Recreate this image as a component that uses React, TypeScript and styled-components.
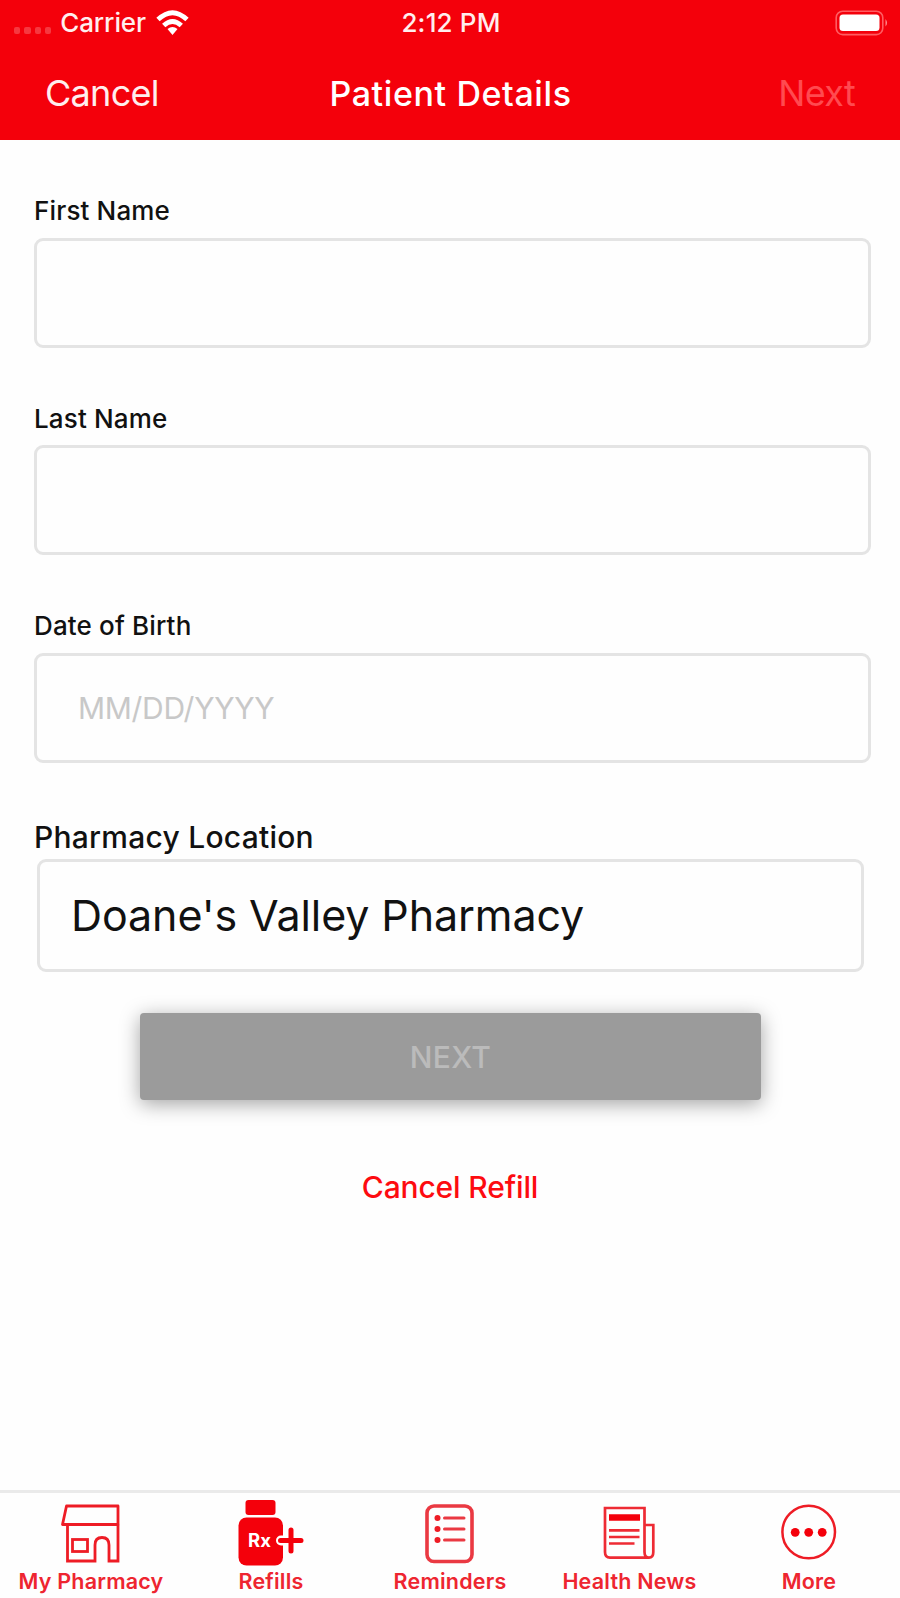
import React from "react";
import styled, { createGlobalStyle } from "styled-components";

const RED = "#f4000b";

const GlobalStyle = createGlobalStyle`
  *, *::before, *::after { box-sizing: border-box; }
  body { margin: 0; background: #fefefe; font-family: Inter, "Liberation Sans", sans-serif; color: #111; }
  button, input { font-family: inherit; }
`;

const Screen = styled.div`
  width: 900px;
  height: 1598px;
  display: flex;
  flex-direction: column;
  overflow: hidden;
  background: #fefefe;
`;

const Header = styled.header`
  height: 140px;
  flex: none;
  background: ${RED};
  color: #ffeeee;
`;

const StatusBar = styled.div`
  height: 46px;
  display: grid;
  grid-template-columns: 1fr auto 1fr;
  align-items: center;
  padding: 0 11px 0 14px;
  font-size: 26px;
  font-weight: 500;
  line-height: 46px;
`;

const StatusGroup = styled.div<{ $end?: boolean }>`
  display: flex;
  align-items: center;
  justify-content: ${(p) => (p.$end ? "flex-end" : "flex-start")};
`;

const Signal = styled.div`
  display: flex;
  gap: 4px;
  margin: 15px 9px 0 0;
`;

const SignalDot = styled.i`
  width: 6.3px;
  height: 6.5px;
  border-radius: 2px;
  background: rgba(255, 255, 255, 0.22);
`;

const Carrier = styled.span`
  letter-spacing: -0.1px;
  margin-right: 10px;
`;

const Clock = styled.span`
  letter-spacing: 0.15px;
  margin-right: 1px;
`;

const NavBar = styled.nav`
  height: 94px;
  display: grid;
  grid-template-columns: 1fr auto 1fr;
  align-items: center;
  padding: 0 45px;
`;

const NavButton = styled.button<{ $end?: boolean }>`
  border: 0;
  padding: 0;
  background: none;
  color: inherit;
  font-size: 36px;
  line-height: 44px;
  letter-spacing: -0.7px;
  text-align: ${(p) => (p.$end ? "right" : "left")};
  &:disabled { color: #ff4a50; }
`;

const Title = styled.h1`
  margin: 0;
  padding: 2px 0 0 1px;
  color: #fff;
  font-size: 34px;
  line-height: 44px;
  font-weight: 500;
  letter-spacing: 0.6px;
`;

const Form = styled.main`
  flex: 1;
  display: flex;
  flex-direction: column;
  padding: 55px 29px 0 34px;
`;

const Field = styled.label`
  display: flex;
  flex-direction: column;
  height: 207.5px;
`;

const FieldLabel = styled.span`
  height: 42.5px;
  line-height: 32px;
  font-size: 26px;
  font-weight: 500;
  letter-spacing: 0.15px;
`;

const Input = styled.input`
  height: 110px;
  width: 100%;
  border: 3px solid #e4e4e4;
  border-radius: 9px;
  background: transparent;
  padding: 0 41px;
  font-size: 30px;
  letter-spacing: -0.3px;
  outline: none;
  &::placeholder { color: #c8c8c8; opacity: 1; }
`;

const LocationLabel = styled.div`
  height: 41px;
  line-height: 38px;
  font-size: 30px;
  font-weight: 500;
  letter-spacing: 0.25px;
`;

const LocationBox = styled.div`
  margin: 0 7px 0 3px;
  height: 113px;
  flex: none;
  border: 3px solid #e4e4e4;
  border-radius: 9px;
  padding: 0 31px;
  font-size: 43px;
  line-height: 107px;
  letter-spacing: -0.1px;
  white-space: nowrap;
`;

const NextButton = styled.button`
  width: 621px;
  height: 87px;
  flex: none;
  margin: 41px 0 0 106px;
  padding-top: 3px;
  border: 0;
  border-radius: 4px;
  background: #9b9b9b;
  color: #bbb;
  font-size: 30px;
  font-weight: 500;
  letter-spacing: 0.3px;
  box-shadow: 0 4px 20px rgba(0, 0, 0, 0.36);
`;

const CancelRefill = styled.button`
  margin: 68px 0 0 0;
  padding: 0 5px 0 0;
  border: 0;
  background: none;
  color: #fd0b10;
  font-size: 30px;
  line-height: 38px;
  font-weight: 500;
  letter-spacing: -0.15px;
`;

const TabBar = styled.nav`
  height: 108px;
  flex: none;
  border-top: 3px solid #eaeaea;
  display: grid;
  grid-template-columns: repeat(5, 1fr);
`;

const Tab = styled.a`
  display: flex;
  flex-direction: column;
  align-items: center;
  color: #ee2530;
  font-size: 21.5px;
  line-height: 27px;
  font-weight: 600;
  letter-spacing: 0.2px;
  white-space: nowrap;
  svg { display: block; width: 90px; height: 75px; }
`;

const TabName = styled.span<{ $shift: number }>`
  margin-left: ${(p) => p.$shift}px;
`;

const WifiIcon = () => (
  <svg width="33" height="26" viewBox="0 0 33 26" fill="none" stroke="#fff" strokeWidth="4.8">
    <path d="M2 9.600Q16.500 -4.200 31 9.600" />
    <path d="M7.700 15.500Q16.500 7.400 25.300 15.500" />
    <path d="M11.500 19Q16.500 15 21.500 19L16.500 25Z" fill="#fff" stroke="none" />
  </svg>
);

const BatteryIcon = () => (
  <svg width="54" height="26" viewBox="0 0 54 26">
    <rect x="1.200" y="1.200" width="46.600" height="23.400" rx="6.500" fill="none" stroke="#ff5c62" strokeWidth="1.600" />
    <rect x="4.500" y="4.500" width="40" height="16.500" rx="3.500" fill="#fff" />
    <path d="M50.500 9Q53.600 12.800 50.500 16.500Z" fill="#ff8a8e" />
  </svg>
);

const StoreIcon = () => (
  <svg viewBox="0 0 90 75" fill="none" stroke="#ee1c25" strokeWidth="2.800">
    <path d="M21.500 13H73V31.500H17.500Z" strokeLinejoin="round" />
    <path d="M22.500 31.500V68H50V52Q50 44.500 57 44.500Q64 44.500 64 52V68H73V31.500" />
    <rect x="27.500" y="46.500" width="15" height="12" />
  </svg>
);

const RefillIcon = () => (
  <svg viewBox="0 0 90 75">
    <rect x="20.500" y="7" width="30" height="15" rx="3" fill="#f4000b" />
    <rect x="13.500" y="24.500" width="44.500" height="48" rx="8" fill="#f4000b" />
    <text x="23" y="53.500" fill="#fff" fontSize="18.500" fontWeight="700" letterSpacing="0">Rx</text>
    <path d="M56 47.500H62" fill="none" stroke="#fff" strokeWidth="10" strokeLinecap="round" />
    <path d="M55.500 47.500H76M66 37V58" fill="none" stroke="#f4000b" strokeWidth="5" strokeLinecap="round" />
  </svg>
);

const ListIcon = () => (
  <svg viewBox="0 0 90 75" fill="none" stroke="#ea3942" strokeWidth="3.600">
    <rect x="22" y="13" width="45" height="55.500" rx="7" />
    <path d="M39.500 25H59M39.500 36H59M39.500 47H59" strokeWidth="3" strokeLinecap="round" />
    <g fill="#ee1c25" stroke="none">
      <circle cx="32.500" cy="25" r="3" />
      <circle cx="32.500" cy="36" r="3" />
      <circle cx="32.500" cy="47" r="3" />
    </g>
  </svg>
);

const NewsIcon = () => (
  <svg viewBox="0 0 90 75" fill="none" stroke="#ee2b34" strokeWidth="2.700">
    <g transform="translate(-1 0)">
      <path d="M65 64.700H26Q21 64.700 21 59V15H60.500V59Q60.500 64.700 65 64.700Q69.300 64.700 69.300 59V32H60.500" />
      <path d="M25 44H55.500M25 37.300H55.500M25 50.500H50.500" />
      <path d="M25 24.500H56" stroke="#f4000b" strokeWidth="6.500" />
    </g>
  </svg>
);

const MoreIcon = () => (
  <svg viewBox="0 0 90 75" fill="none" stroke="#ee1c25" strokeWidth="2.500">
    <circle cx="43.700" cy="39" r="26.300" />
    <g fill="#f4000b" stroke="none">
      <circle cx="30.200" cy="39.300" r="4.400" />
      <circle cx="43.700" cy="39.300" r="4.400" />
      <circle cx="57.200" cy="39.300" r="4.400" />
    </g>
  </svg>
);

const tabs = [
  { name: "My Pharmacy", shift: 2, Icon: StoreIcon },
  { name: "Refills", shift: 2, Icon: RefillIcon },
  { name: "Reminders", shift: 0, Icon: ListIcon },
  { name: "Health News", shift: -1, Icon: NewsIcon },
  { name: "More", shift: -2, Icon: MoreIcon },
];

export default function App() {
  return (
    <Screen>
      <GlobalStyle />
      <Header>
        <StatusBar>
          <StatusGroup>
            <Signal>
              <SignalDot /><SignalDot /><SignalDot /><SignalDot />
            </Signal>
            <Carrier>Carrier</Carrier>
            <WifiIcon />
          </StatusGroup>
          <Clock>2:12 PM</Clock>
          <StatusGroup $end>
            <BatteryIcon />
          </StatusGroup>
        </StatusBar>
        <NavBar>
          <NavButton>Cancel</NavButton>
          <Title>Patient Details</Title>
          <NavButton $end disabled>Next</NavButton>
        </NavBar>
      </Header>
      <Form>
        <Field>
          <FieldLabel>First Name</FieldLabel>
          <Input />
        </Field>
        <Field>
          <FieldLabel>Last Name</FieldLabel>
          <Input />
        </Field>
        <Field>
          <FieldLabel>Date of Birth</FieldLabel>
          <Input placeholder="MM/DD/YYYY" />
        </Field>
        <LocationLabel>Pharmacy Location</LocationLabel>
        <LocationBox>Doane's Valley Pharmacy</LocationBox>
        <NextButton disabled>NEXT</NextButton>
        <CancelRefill>Cancel Refill</CancelRefill>
      </Form>
      <TabBar>
        {tabs.map(({ name, shift, Icon }) => (
          <Tab key={name}>
            <Icon />
            <TabName $shift={shift}>{name}</TabName>
          </Tab>
        ))}
      </TabBar>
    </Screen>
  );
}
